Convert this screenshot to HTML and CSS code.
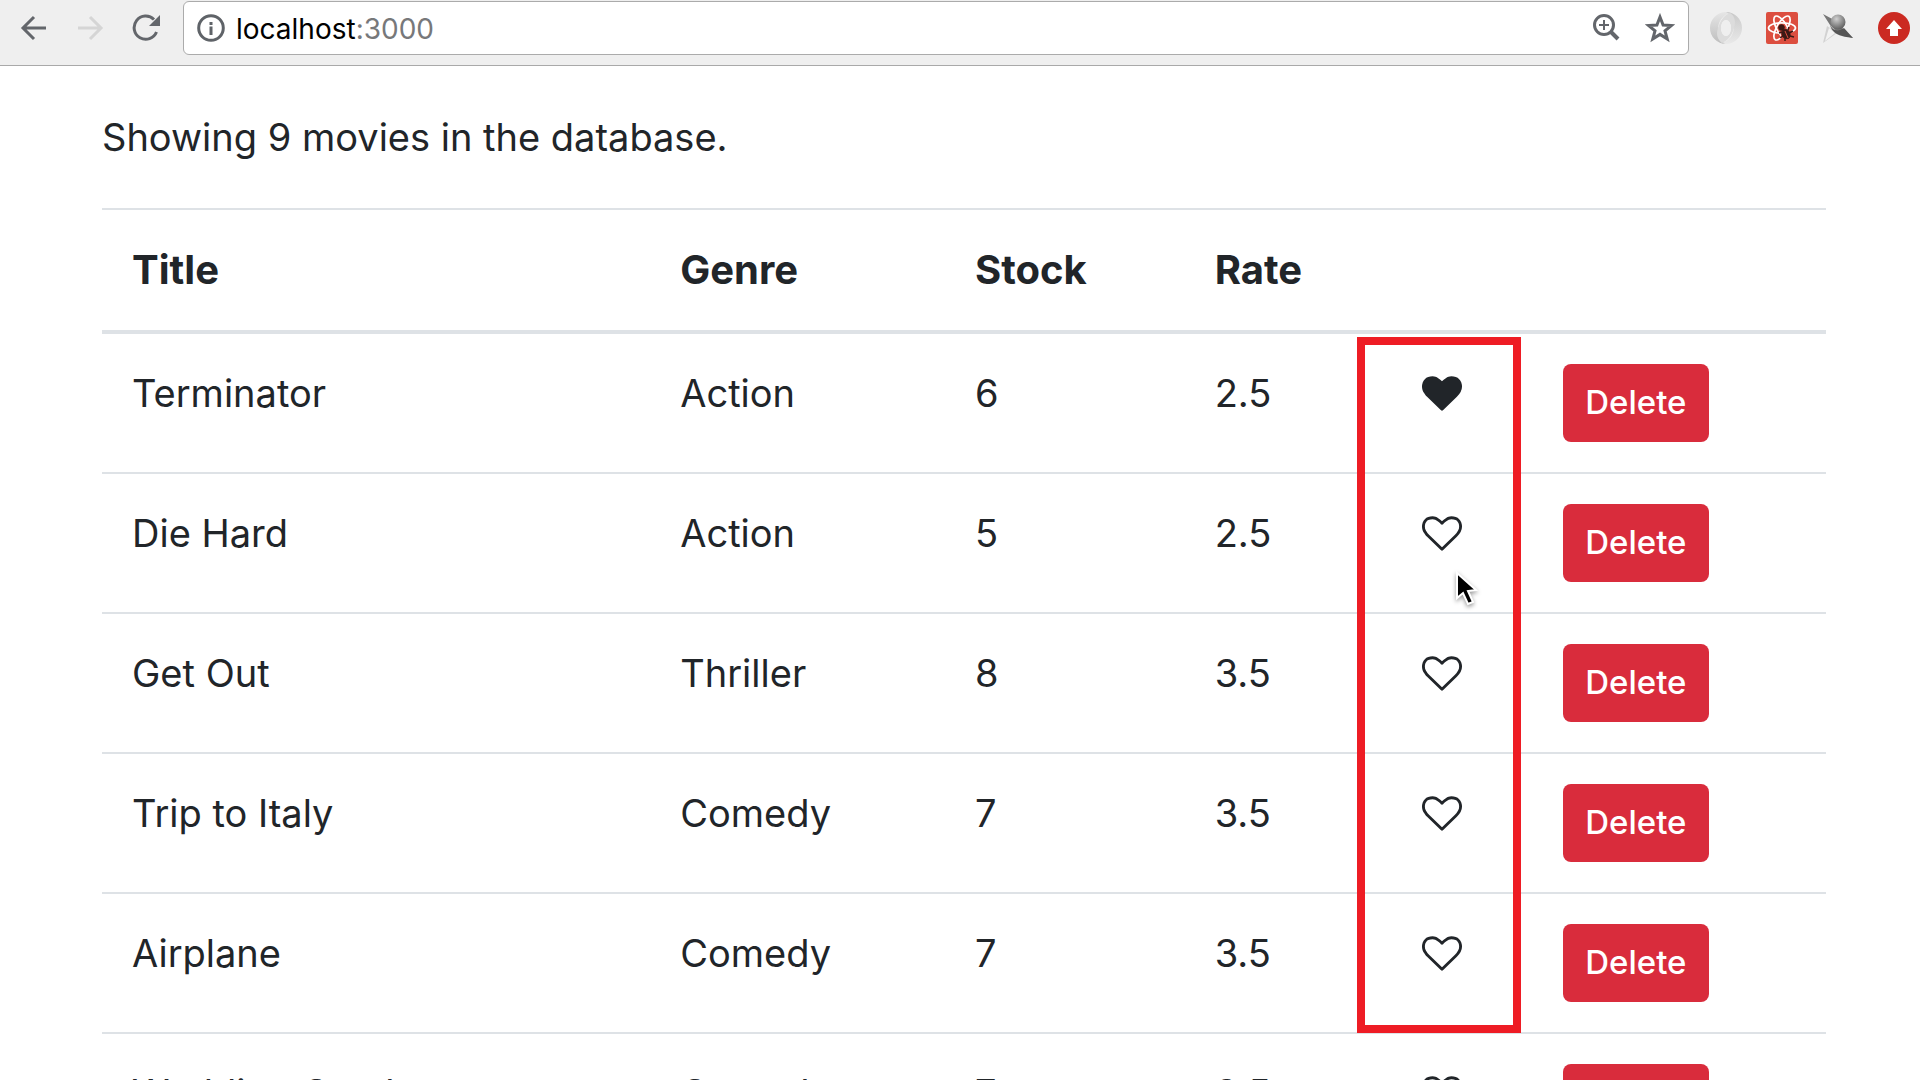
FILE: index.html
```html
<!DOCTYPE html>
<html lang="en">
<head>
<meta charset="utf-8">
<title>Movies</title>
<link rel="stylesheet" href="styles.css">
</head>
<body>
<svg class="sprite" aria-hidden="true">
  <symbol id="heart" viewBox="0 128 1792 1536"><path d="M896 1664q-26 0-44-18l-624-602q-10-8-27.500-26t-55.500-65.500-68-97.500-53.500-121-23.500-138q0-220 127-344t351-124q62 0 126.500 21.500t120 58 95.500 68.500 76 68q36-36 76-68t95.500-68.500 120-58 126.500-21.500q224 0 351 124t127 344q0 221-229 450l-623 600q-18 18-44 18z"/></symbol>
  <symbol id="heart-o" viewBox="0 128 1792 1536"><path d="M1664 596q0-81-21.500-143t-55-98.500-81.500-59.500-94-31-98-8-112 25.500-110.500 64-86.500 72-60 61.500q-18 22-49 22t-49-22q-24-28-60-61.500t-86.500-72-110.500-64-112-25.500-98 8-94 31-81.500 59.500-55 98.500-21.500 143q0 168 187 355l581 560 580-559q188-188 188-356zm128 0q0 221-229 450l-623 600q-18 18-44 18t-44-18l-624-602q-10-8-27.500-26t-55.500-65.500-68-97.500-53.500-121-23.500-138q0-220 127-344t351-124q62 0 126.500 21.500t120 58 95.500 68.500 76 68q36-36 76-68t95.500-68.500 120-58 126.500-21.500q224 0 351 124t127 344z"/></symbol>
</svg>
<div class="window">
  <header class="toolbar">
    <nav class="nav">
      <button class="icon-btn" aria-label="Back"><svg width="28" height="28" viewBox="0 0 28 28" class="line"><path d="M26 14H3M14 3 3 14l11 11"/></svg></button>
      <button class="icon-btn" aria-label="Forward" disabled><svg width="28" height="28" viewBox="0 0 28 28" class="line"><path d="M2 14h23M14 3l11 11-11 11"/></svg></button>
      <button class="icon-btn" aria-label="Reload"><svg width="28" height="28" viewBox="0 0 28 28" class="line"><path d="M24.500 18A11.600 11.600 0 1 1 22 5.500"/><path class="solid" d="M28 1v11H17z"/></svg></button>
    </nav>
    <div class="address">
      <svg width="28" height="28" viewBox="0 0 28 28" class="line"><circle cx="14" cy="14" r="12.300"/><path class="solid" d="M12.500 8h3v3h-3zM12.500 12.500h3V21h-3z"/></svg>
      <a class="url" href="http://localhost:3000">localhost<span class="port">:3000</span></a>
      <button class="icon-btn" aria-label="Zoom"><svg width="28" height="28" viewBox="0 0 28 28" class="line"><circle cx="12" cy="11" r="9.500"/><path d="M19 18l7 7" class="thick"/><path d="M12 6v10M7 11h10" class="thin"/></svg></button>
      <button class="icon-btn" aria-label="Bookmark"><svg width="30" height="30" viewBox="0 0 30 30" class="line"><path d="M15 4l3.100 8 8.400.5-6.500 5.300 2.200 8.200-7.200-4.600L7.800 26l2.200-8.200-6.500-5.300 8.400-.5z"/></svg></button>
    </div>
    <div class="extensions">
      <button class="icon-btn" aria-label="JSON viewer"><svg width="32" height="32" viewBox="0 0 32 32">
        <defs><linearGradient id="ringA" x1="0" y1="0" x2="0" y2="1"><stop offset="0" stop-color="#c9c9c9"/><stop offset="1" stop-color="#e9e9e9"/></linearGradient><linearGradient id="ringB" x1="0" y1="0" x2="0" y2="1"><stop offset="0" stop-color="#e6e6e6"/><stop offset="1" stop-color="#bdbdbd"/></linearGradient></defs>
        <path fill="url(#ringB)" d="M16 0a16 16 0 0 0 0 32c-4-2-8-6-8-14C8 9 13 3 20 1z"/>
        <path fill="url(#ringA)" d="M16 32a16 16 0 0 0 0-32c5 2 8 7 8 14 0 9-5 15-12 17z"/>
        <path fill="#dcdcdc" fill-rule="evenodd" d="M20 1c5 3 6 9 4 15-2 8-7 13-12 15-5-4-6-9-4-15 2-7 6-13 12-15zM16 8c-3 0-5 4-5 8s2 8 5 8 5-4 5-8-2-8-5-8z"/>
        <ellipse cx="16" cy="16" rx="5" ry="8" fill="#efefef"/>
      </svg></button>
      <button class="icon-btn" aria-label="React developer tools"><svg width="32" height="32" viewBox="0 0 32 32">
        <rect width="32" height="32" rx="2" fill="#dc4e3f"/>
        <g fill="none" stroke="#fff" stroke-width="1.700"><ellipse cx="16" cy="16" rx="13.500" ry="5.200"/><ellipse cx="16" cy="16" rx="13.500" ry="5.200" transform="rotate(60 16 16)"/><ellipse cx="16" cy="16" rx="13.500" ry="5.200" transform="rotate(120 16 16)"/></g>
        <path d="M14 18l11-1 3 9-6 5-6-1z" fill="#dc4e3f"/>
        <g fill="#3b1915" stroke="#3b1915"><circle cx="15.500" cy="15.500" r="2.800"/><ellipse cx="20" cy="22" rx="3.800" ry="5" transform="rotate(-30 20 22)"/><path d="M16 20l-3 1M17 24l-3 2M19 26v3M22 18l1-3M23 21l4-2M24 24l4 1" stroke-width="1.500"/></g>
        <path d="M19 19l3 7" stroke="#dc4e3f"/>
      </svg></button>
      <button class="icon-btn" aria-label="Pin"><svg width="32" height="32" viewBox="0 0 32 32">
        <defs><radialGradient id="ball" cx=".4" cy=".3" r=".7"><stop offset="0" stop-color="#d0d0d0"/><stop offset="1" stop-color="#606060"/></radialGradient></defs>
        <path fill="#d2d2d2" d="M5 14 1 31l14-10z"/><path fill="#f2f2f2" d="M7 16 3 29l10-8z"/>
        <path fill="#777" d="M1 2l13 7 9 10 8 7-14-4-9-9z"/>
        <circle cx="16" cy="10" r="7.500" fill="url(#ball)"/>
        <path fill="#555" d="M8 13c3 6 8 7 14 3l9 10c-8-1-20-2-23-13z"/>
      </svg></button>
      <button class="icon-btn" aria-label="Update"><svg width="32" height="32" viewBox="0 0 32 32"><circle cx="16" cy="16" r="16" fill="#cb2a22"/><path fill="#fff" d="M16 8l8 9h-4v7h-8v-7H8z"/></svg></button>
    </div>
  </header>
  <main class="page">
    <p class="summary">Showing 9 movies in the database.</p>
    <div class="table-wrap">
      <table class="movies">
        <colgroup><col class="c-title"><col class="c-genre"><col class="c-stock"><col class="c-rate"><col class="c-like"><col></colgroup>
        <thead><tr><th>Title</th><th>Genre</th><th>Stock</th><th>Rate</th><th></th><th></th></tr></thead>
        <tbody>
          <tr><td>Terminator</td><td>Action</td><td>6</td><td>2.5</td><td><button class="like" aria-label="Unlike"><svg width="40" height="35"><use href="#heart"/></svg></button></td><td><button class="delete">Delete</button></td></tr>
          <tr><td>Die Hard</td><td>Action</td><td>5</td><td>2.5</td><td><button class="like" aria-label="Like"><svg width="40" height="35"><use href="#heart-o"/></svg></button></td><td><button class="delete">Delete</button></td></tr>
          <tr><td>Get Out</td><td>Thriller</td><td>8</td><td>3.5</td><td><button class="like" aria-label="Like"><svg width="40" height="35"><use href="#heart-o"/></svg></button></td><td><button class="delete">Delete</button></td></tr>
          <tr><td>Trip to Italy</td><td>Comedy</td><td>7</td><td>3.5</td><td><button class="like" aria-label="Like"><svg width="40" height="35"><use href="#heart-o"/></svg></button></td><td><button class="delete">Delete</button></td></tr>
          <tr><td>Airplane</td><td>Comedy</td><td>7</td><td>3.5</td><td><button class="like" aria-label="Like"><svg width="40" height="35"><use href="#heart-o"/></svg></button></td><td><button class="delete">Delete</button></td></tr>
          <tr><td>Wedding Crashers</td><td>Comedy</td><td>7</td><td>3.5</td><td><button class="like" aria-label="Like"><svg width="40" height="35"><use href="#heart-o"/></svg></button></td><td><button class="delete">Delete</button></td></tr>
        </tbody>
      </table>
      <div class="highlight"></div>
      <svg class="cursor" width="30" height="42" viewBox="0 0 30 42"><path d="M5 3v25l6-5 5 11 5-2-5-11 8-1z" fill="#000" stroke="#fff" stroke-width="2"/></svg>
    </div>
  </main>
</div>
</body>
</html>
```
FILE: styles.css
```css
* { box-sizing: border-box; }

body {
  margin: 0;
  background: #fff;
  color: #212529;
  font-family: Inter, "Liberation Sans", sans-serif;
  font-size: 38px;
  line-height: 58px;
}

button {
  font: inherit;
  color: inherit;
  border: 0;
  padding: 0;
  background: none;
  cursor: pointer;
}

svg { display: block; }

.sprite { position: absolute; width: 0; height: 0; }

.window {
  display: flex;
  flex-direction: column;
  height: 100vh;
}

/* Browser toolbar */
.toolbar {
  display: flex;
  flex: none;
  align-items: center;
  height: 66px;
  padding: 0 10px 10px 20px;
  border-bottom: 1px solid #a9a9a9;
  background: #efefef;
}

.nav { display: flex; gap: 28px; margin-right: 23px; }

.icon-btn { display: block; color: #63666b; }
.icon-btn:disabled { color: #d5d5d5; }

.line {
  fill: none;
  stroke: currentColor;
  stroke-width: 3;
}
.line .solid { fill: currentColor; stroke: none; }
.line .thick { stroke-width: 4; }
.line .thin { stroke-width: 2; }

.address {
  display: flex;
  flex: 1;
  align-items: center;
  height: 54px;
  padding: 0 13px;
  border: 1px solid #ababab;
  border-radius: 6px;
  background: #fff;
  color: #5f6368;
}

.url {
  flex: 1;
  padding: 2px 0 0 11px;
  color: #000;
  font-size: 28px;
  line-height: 40px;
  text-decoration: none;
}
.port { color: #77787a; }
.address .icon-btn { margin-left: 25px; }

.extensions { display: flex; gap: 24px; margin-left: 21px; }

/* Movies page */
.page {
  flex: 1;
  min-height: 0;
  padding: 42px 94px 0 102px;
  overflow-y: auto;
  scrollbar-width: none;
}

.summary { margin: 0 0 42px; }

.table-wrap { position: relative; }

.movies {
  width: 100%;
  table-layout: fixed;
  border-spacing: 0;
  border-top: 2px solid #dee2e6;
}
.c-title { width: 31.8%; }
.c-genre { width: 17.1%; }
.c-stock { width: 13.9%; }
.c-rate { width: 12%; }
.c-like { width: 8.2%; }

.movies th,
.movies td {
  padding: 30px;
  text-align: left;
  vertical-align: top;
  white-space: nowrap;
}
.movies th {
  border-bottom: 4px solid #dee2e6;
  font-size: 40px;
  font-weight: 700;
  line-height: 60px;
}
.movies td { border-bottom: 2px solid #dee2e6; }

.like { display: block; padding: 12px 0; }
.like svg { fill: currentColor; }

.delete {
  display: block;
  width: 146px;
  height: 78px;
  padding-bottom: 2px;
  border-radius: 8px;
  background: #d92c3c;
  color: #fff;
  font-size: 33px;
  font-weight: 500;
  line-height: 52px;
}

.highlight {
  position: absolute;
  top: 129px;
  left: 72.8%;
  width: 164px;
  height: 696px;
  border: 8px solid #ee1c24;
  pointer-events: none;
}

.cursor {
  position: absolute;
  top: 362px;
  left: 78.3%;
  filter: drop-shadow(0 2px 2px #0006);
  pointer-events: none;
}
```
